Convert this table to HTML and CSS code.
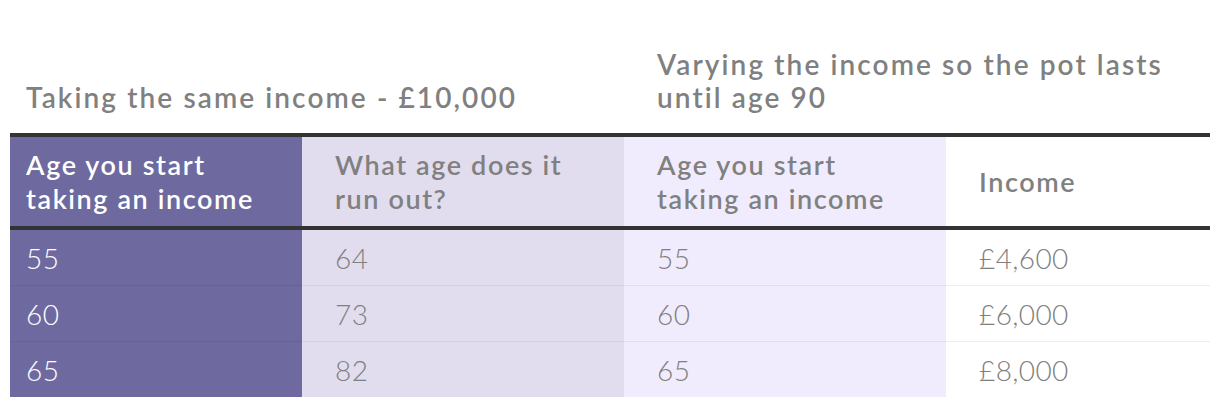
FILE: index.html
```html
<!DOCTYPE html>
<html lang="en">
<head>
<meta charset="utf-8">
<title>Income comparison</title>
<link rel="stylesheet" href="styles.css">
</head>
<body>
<div class="page">
  <table class="compare">
    <colgroup>
      <col class="c1"><col class="c2"><col class="c3"><col class="c4">
    </colgroup>
    <thead>
      <tr class="titles">
        <th colspan="2" class="title title-left">Taking the same income - £10,000</th>
        <th colspan="2" class="title title-right">Varying the income so the pot lasts<br>until age 90</th>
      </tr>
      <tr class="heads">
        <th class="col1">Age you start<br>taking an income</th>
        <th class="col2">What age does it<br>run out?</th>
        <th class="col3">Age you start<br>taking an income</th>
        <th class="col4">Income</th>
      </tr>
    </thead>
    <tbody>
      <tr>
        <td class="col1">55</td><td class="col2">64</td><td class="col3">55</td><td class="col4">£4,600</td>
      </tr>
      <tr>
        <td class="col1">60</td><td class="col2">73</td><td class="col3">60</td><td class="col4">£6,000</td>
      </tr>
      <tr class="last">
        <td class="col1">65</td><td class="col2">82</td><td class="col3">65</td><td class="col4">£8,000</td>
      </tr>
    </tbody>
  </table>
</div>
</body>
</html>
```
FILE: styles.css
```css
html, body {
  margin: 0;
  padding: 0;
  background: #ffffff;
}

body {
  font-family: Lato, "Open Sans", "Liberation Sans", sans-serif;
  color: #808080;
}

.page {
  padding: 0 10px;
}

.compare {
  width: 1200px;
  border-collapse: separate;
  border-spacing: 0;
  table-layout: fixed;
}

.c1 { width: 292px; }
.c2 { width: 322px; }
.c3 { width: 322px; }
.c4 { width: 264px; }

.title {
  text-align: left;
  vertical-align: bottom;
  font-size: 28px;
  line-height: 33px;
  font-weight: 600;
  letter-spacing: 2.1px;
  color: #808080;
  padding: 48px 0 19px 0;
}

.title-left { padding-left: 16px; }
.title-right { padding-left: 33px; }

.heads th {
  border-top: 4px solid #333333;
  border-bottom: 4px solid #333333;
  height: 97px;
  box-sizing: border-box;
  padding: 0 0 0 33px;
  text-align: left;
  vertical-align: middle;
  font-size: 27px;
  line-height: 34px;
  font-weight: 600;
  letter-spacing: 1.6px;
  color: #808080;
}

.heads th.col1 {
  padding-left: 16px;
  color: #ffffff;
}

td {
  height: 56px;
  box-sizing: border-box;
  padding: 0 0 0 33px;
  font-size: 28px;
  font-weight: 300;
  letter-spacing: 0.4px;
  color: #808080;
  vertical-align: middle;
  border-bottom: 1px solid;
}

td.col1 {
  padding-left: 16px;
  color: #ffffff;
}

.col1 { background: #6e6aa0; border-bottom-color: #66629a; }
.col2 { background: #e1ddef; border-bottom-color: #d4d0e3; }
.col3 { background: #f0ecfd; border-bottom-color: #e2deef; }
.col4 { background: #ffffff; border-bottom-color: #eeeeee; }

.heads th { border-bottom-color: #333333; }

tr.last td { border-bottom: none; height: 55px; }
```
